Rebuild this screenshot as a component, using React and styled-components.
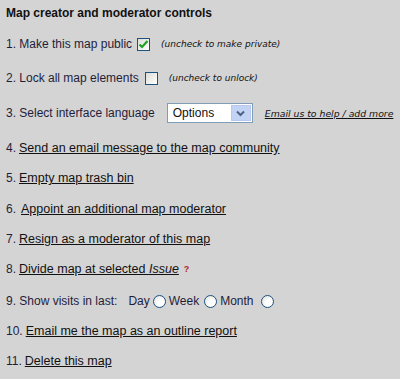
import React from 'react';
import styled, { createGlobalStyle } from 'styled-components';

const GlobalStyle = createGlobalStyle`
  html, body {
    margin: 0;
    padding: 0;
    background: #d4d4d4;
  }
  body {
    font-family: "Liberation Sans", Arial, sans-serif;
  }
`;

const Panel = styled.div`
  width: 400px;
  height: 379px;
  background: #d4d4d4;
  color: #1e1e3c;
  font-size: 12px;
  padding-left: 6px;
  box-sizing: border-box;
  display: flex;
  flex-direction: column;
`;

const Title = styled.div`
  height: 26px;
  display: flex;
  align-items: center;
  font-weight: bold;
  color: #111;
`;

const Row = styled.div`
  height: ${(p) => p.$h}px;
  display: flex;
  align-items: center;
  white-space: nowrap;
`;

const Link = styled.a`
  color: #111;
  font-size: 12.5px;
  text-decoration: underline;
  cursor: pointer;
  margin-left: ${(p) => p.$gap || 3}px;
`;

const Hint = styled.span`
  font-family: "DejaVu Sans", Verdana, sans-serif;
  font-style: italic;
  font-size: 9px;
  color: #111;
  margin-left: ${(p) => p.$gap}px;
`;

const HelpLink = styled.a`
  font-family: "DejaVu Sans", Verdana, sans-serif;
  font-style: italic;
  font-size: 9.3px;
  color: #111;
  text-decoration: underline;
  margin-left: 12px;
`;

const Box = styled.span`
  display: inline-flex;
  width: 13px;
  height: 13px;
  box-sizing: border-box;
  border: 1px solid #1c5180;
  background: linear-gradient(135deg, #dcdcd7, #ffffff);
  margin-left: ${(p) => p.$gap}px;
  align-items: center;
  justify-content: center;
`;

const Radio = styled.span`
  display: inline-block;
  width: 13px;
  height: 13px;
  box-sizing: border-box;
  border-radius: 50%;
  border: 1px solid #1c5180;
  background: radial-gradient(circle at 65% 65%, #ffffff 30%, #dcdcd7 100%);
  margin: 0 ${(p) => p.$r || 3}px 0 ${(p) => p.$l || 3}px;
`;

const Choice = styled.span`
  margin-left: ${(p) => p.$gap || 0}px;
`;

const Select = styled.div`
  width: 86px;
  height: 20px;
  box-sizing: border-box;
  border: 1px solid #7f9db9;
  background: #fff;
  margin-left: ${(p) => p.$gap}px;
  display: flex;
  align-items: center;
  padding: 1px;
  color: #111;
`;

const SelectText = styled.span`
  flex: 1;
  padding-left: 4px;
`;

const SelectButton = styled.span`
  width: 20px;
  height: 16px;
  background: #c3d3f5;
  border: 1px solid #b7c9ef;
  box-sizing: border-box;
  display: flex;
  align-items: center;
  justify-content: center;
`;

const Help = styled.sup`
  color: #b22222;
  font-weight: bold;
  font-size: 9px;
  margin-left: 5px;
`;

const Check = () => (
  <svg width="11" height="11" viewBox="0 0 11 11">
    <path d="M1.5 5.5 L4 8 L9.5 2" fill="none" stroke="#21a121" strokeWidth="2.2" />
  </svg>
);

const Chevron = () => (
  <svg width="9" height="7" viewBox="0 0 9 7">
    <path d="M1 1.5 L4.5 5 L8 1.5" fill="none" stroke="#4d6185" strokeWidth="2" />
  </svg>
);

export default function App() {
  return (
    <>
      <GlobalStyle />
      <Panel>
        <Title>Map creator and moderator controls</Title>
        <Row $h={36}>
          1. Make this map public
          <Box $gap={5}>
            <Check />
          </Box>
          <Hint $gap={11}>(uncheck to make private)</Hint>
        </Row>
        <Row $h={32}>
          2. Lock all map elements
          <Box $gap={6} />
          <Hint $gap={11}>(uncheck to unlock)</Hint>
        </Row>
        <Row $h={38}>
          3. Select interface language
          <Select $gap={12}>
            <SelectText>Options</SelectText>
            <SelectButton>
              <Chevron />
            </SelectButton>
          </Select>
          <HelpLink>Email us to help / add more</HelpLink>
        </Row>
        <Row $h={32}>
          4.<Link>Send an email message to the map community</Link>
        </Row>
        <Row $h={28}>
          5.<Link>Empty map trash bin</Link>
        </Row>
        <Row $h={34}>
          6.<Link $gap={5}>Appoint an additional map moderator</Link>
        </Row>
        <Row $h={26}>
          7.<Link>Resign as a moderator of this map</Link>
        </Row>
        <Row $h={34}>
          8.<Link>
            Divide map at selected <i>Issue</i>
          </Link>
          <Help>?</Help>
        </Row>
        <Row $h={30}>
          9. Show visits in last:
          <Choice $gap={11}>Day</Choice>
          <Radio $l={3} $r={3} />
          <Choice>Week</Choice>
          <Radio $l={5} $r={3} />
          <Choice>Month</Choice>
          <Radio $l={7} $r={3} />
        </Row>
        <Row $h={30}>
          10.<Link>Email me the map as an outline report</Link>
        </Row>
        <Row $h={30}>
          11.<Link>Delete this map</Link>
        </Row>
      </Panel>
    </>
  );
}
